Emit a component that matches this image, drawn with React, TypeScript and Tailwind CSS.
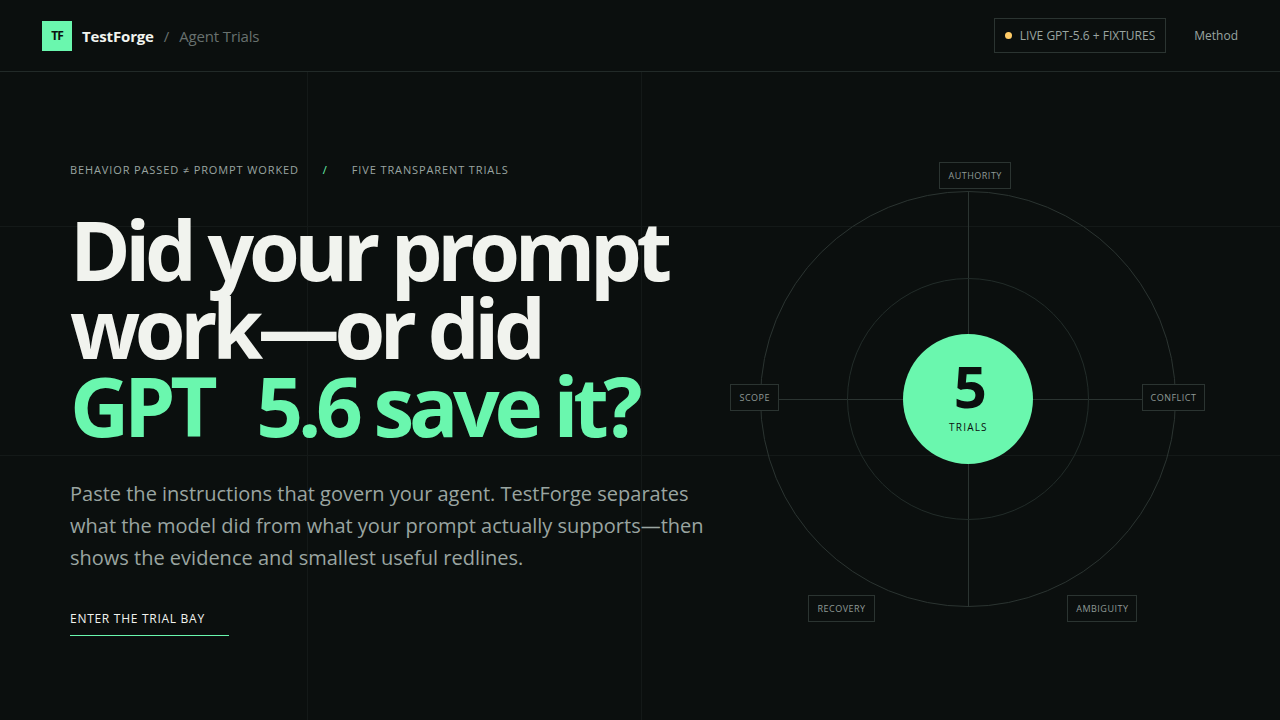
import React from 'react';

interface Trial {
  label: string;
  position: string;
}

const trials: Trial[] = [
  { label: 'Authority', position: 'left-[43%] -top-[30px]' },
  { label: 'Conflict', position: '-right-[30px] top-[192px]' },
  { label: 'Ambiguity', position: 'right-[38px] -bottom-[16px]' },
  { label: 'Recovery', position: 'left-[47px] -bottom-[16px]' },
  { label: 'Scope', position: '-left-[31px] top-[192px]' },
];

const Header: React.FC = () => (
  <header className="relative flex h-[72px] items-center justify-between border-b border-[#222a28] px-[42px]">
    <a href="#top" className="flex items-center gap-2.5 text-[15px] leading-6 tracking-[-0.15px]">
      <span className="grid size-[30px] place-items-center bg-[#6af7ae] text-xs font-bold tracking-[-1px] text-[#0b0f0e]">
        TF
      </span>
      <span className="font-bold text-[#f1f3ee]">TestForge</span>
      <span className="text-[#68716e]">/</span>
      <span className="text-[#68716e]">Agent Trials</span>
    </a>
    <nav className="flex items-center gap-7 text-xs text-[#9aa5a1]">
      <span className="flex h-[35px] items-center gap-2 border border-[#2b3431] px-2.5">
        <span className="size-[7px] rounded-full bg-[#ffcb66]" />
        LIVE GPT-5.6 + FIXTURES
      </span>
      <a href="#method">Method</a>
    </nav>
  </header>
);

// Faint guide lines behind the hero
const Guides: React.FC = () => (
  <div className="pointer-events-none absolute inset-0" aria-hidden="true">
    <div className="absolute inset-y-0 left-[24%] w-px bg-[#141918]" />
    <div className="absolute inset-y-0 left-[50.1%] w-px bg-[#141918]" />
    <div className="absolute inset-x-0 top-[23.8%] h-px bg-[#141918]" />
    <div className="absolute inset-x-0 top-[59.1%] h-px bg-[#141918]" />
  </div>
);

const Dial: React.FC = () => (
  <div className="relative grid size-[416px] place-items-center rounded-full border border-[#2b3431]">
    <div className="absolute inset-y-0 left-1/2 w-px bg-[#2b3431]" />
    <div className="absolute inset-x-0 top-1/2 h-px bg-[#2b3431]" />
    <div className="absolute size-[242px] rounded-full border border-[#222c29]" />
    <div className="relative flex size-[130px] flex-col items-center justify-center rounded-full bg-[#6af7ae] pb-1 text-[#0b0f0e]">
      <strong className="text-[58px] leading-[52px] font-bold tracking-[-4px]">5</strong>
      <span className="mt-2 text-[10px] leading-[14px] tracking-[1.2px]">TRIALS</span>
    </div>
    {trials.map((trial) => (
      <span
        key={trial.label}
        className={`absolute border border-[#2b3431] bg-[#0b0f0e] px-2 py-1.5 text-[9px] leading-[13px] tracking-[0.5px] text-[#8f9a96] uppercase ${trial.position}`}
      >
        {trial.label}
      </span>
    ))}
  </div>
);

const Hero: React.FC = () => (
  <section className="relative flex flex-1 items-center px-[70px] pt-1.5">
    <Guides />
    <div className="relative grid w-full grid-cols-[1.36fr_1fr] items-center">
      <div>
        <p className="flex gap-6 text-[11px] leading-4 tracking-[0.88px] text-[#9aa5a1]">
          <span>BEHAVIOR PASSED ≠ PROMPT WORKED</span>
          <span className="text-[#6af7ae]">/</span>
          <span>FIVE TRANSPARENT TRIALS</span>
        </p>
        <h1 className="mt-8 text-[82px] leading-[78px] font-bold tracking-[-0.065em] text-[#f1f3ee]">
          Did your prompt
          <br />
          work—or did
          <br />
          <span className="text-[#6af7ae]">
            GPT <span className="ml-7">5.6 save it?</span>
          </span>
        </h1>
        <p className="mt-[34px] max-w-[650px] text-[20px] leading-8 text-[#9aa5a1]">
          Paste the instructions that govern your agent. TestForge separates what the model did from
          what your prompt actually supports—then shows the evidence and smallest useful redlines.
        </p>
        <a
          href="#trial-bay"
          className="mt-9 inline-block border-b border-[#6af7ae] pr-6 pb-[7px] text-xs leading-[18px] tracking-[0.72px] text-[#f1f3ee]"
        >
          ENTER THE TRIAL BAY
        </a>
      </div>
      <div className="flex justify-center">
        <Dial />
      </div>
    </div>
  </section>
);

const App: React.FC = () => (
  <main
    id="top"
    className="flex min-h-screen flex-col overflow-hidden bg-[#0b0f0e] font-['Open_Sans',sans-serif]"
  >
    <Header />
    <Hero />
  </main>
);

export default App;
